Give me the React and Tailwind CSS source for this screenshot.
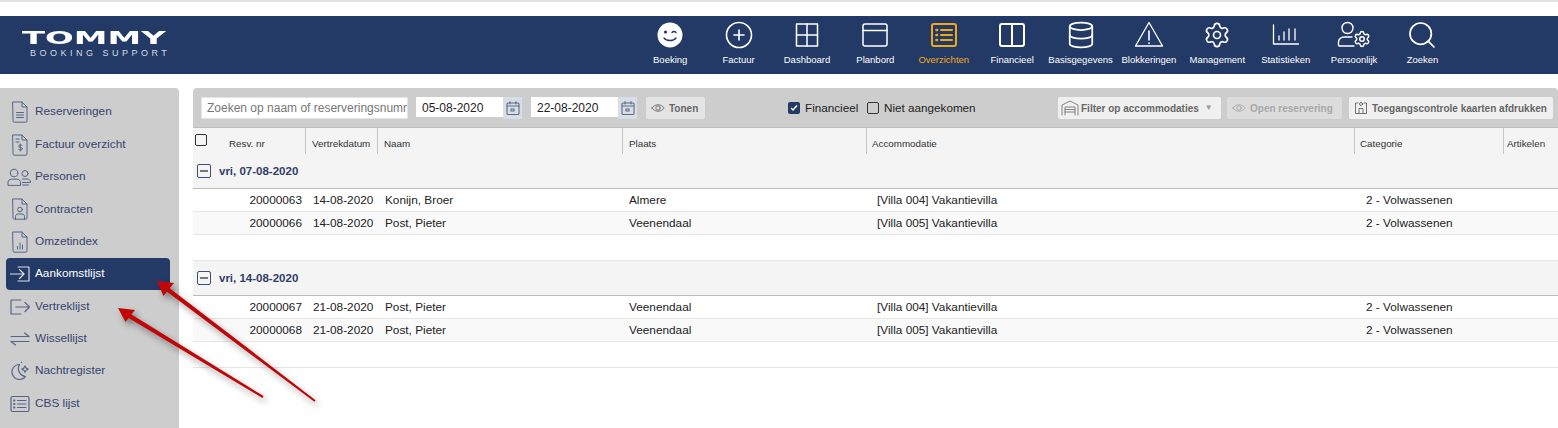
import React from "react";
import { Database, Settings, Search, CirclePlus } from "lucide-react";

const Line = ({ size = 24, className = "", sw = 1.5, children, vb = "0 0 24 24" }) => (
    <svg width={size} height={size} viewBox={vb} fill="none" stroke="currentColor" strokeWidth={sw} strokeLinecap="round" strokeLinejoin="round" className={className}>
        {children}
    </svg>
);

const navItems = [
    {
        label: "Boeking",
        icon: (
            <svg width="26" height="26" viewBox="0 0 26 26">
                <circle cx="13" cy="13" r="12.5" fill="#fff" />
                <circle cx="8.5" cy="10" r="1.6" fill="#243a66" />
                <path d="M15 10.5c1-1.4 3-1.4 4 0" fill="none" stroke="#243a66" strokeWidth="1.4" strokeLinecap="round" />
                <path d="M7 16c2.6 3.4 9.4 3.4 12 0" fill="none" stroke="#243a66" strokeWidth="1.4" strokeLinecap="round" />
            </svg>
        ),
    },
    { label: "Factuur", icon: <CirclePlus size={30} strokeWidth={1.3} /> },
    {
        label: "Dashboard",
        icon: (
            <Line size={26} sw={1.5} vb="0 0 26 26">
                <rect x="2.5" y="2" width="21" height="22" />
                <path d="M13 2v22M2.500 13h21" />
            </Line>
        ),
    },
    {
        label: "Planbord",
        icon: (
            <Line size={28} sw={1.5} vb="0 0 28 28">
                <rect x="2" y="3" width="24" height="22" rx="2" />
                <path d="M2 9.500h24" />
            </Line>
        ),
    },
    {
        label: "Overzichten",
        active: true,
        icon: (
            <Line size={28} sw={2} vb="0 0 28 28">
                <rect x="2" y="3" width="24" height="22" rx="2" />
                <path d="M11 9h11M11 14h11M11 19h11" strokeWidth="2" />
                <path d="M6.500 9h.5M6.500 14h.5M6.500 19h.5" strokeWidth="2.600" />
            </Line>
        ),
    },
    {
        label: "Financieel",
        icon: (
            <Line size={28} sw={2} vb="0 0 28 28">
                <rect x="2" y="3" width="24" height="22" rx="2" />
                <path d="M14 3v22" />
            </Line>
        ),
    },
    { label: "Basisgegevens", icon: <Database size={30} strokeWidth={1.4} /> },
    {
        label: "Blokkeringen",
        icon: (
            <Line size={30} sw={1.3} vb="0 0 30 30">
                <path d="M15 2.500 28.500 26h-27z" />
                <path d="M15 11v9M15 23v.4" strokeWidth="1.600" />
            </Line>
        ),
    },
    { label: "Management", icon: <Settings size={28} strokeWidth={1.4} /> },
    {
        label: "Statistieken",
        icon: (
            <Line size={28} sw={1.300} vb="0 0 28 28">
                <path d="M1.500 4v19h25" />
                <path d="M7 19v-4M12 19v-8M17 19v-11M23 19v-11" />
            </Line>
        ),
    },
    {
        label: "Persoonlijk",
        icon: (
            <svg width="34" height="28" viewBox="0 0 34 28" fill="none" stroke="currentColor" strokeWidth="1.400" strokeLinecap="round" strokeLinejoin="round">
                <circle cx="10.500" cy="7" r="5.500" />
                <path d="M15 16H7c-3 0-5.500 2.500-5.500 5v3c0 .6.400 1 1 1H17" />
                <Settings x={16} y={9} width={18} height={18} strokeWidth={2} />
            </svg>
        ),
    },
    { label: "Zoeken", icon: <Search size={32} strokeWidth={1.3} /> },
];

const DocIcon = ({ children }) => (
    <Line size={24} sw={1} vb="0 0 24 24">
        <path d="M5 2h9l5 5v14a1.200 1.200 0 0 1-1.200 1.200H6.200A1.200 1.200 0 0 1 5 21z" />
        <path d="M14 2v5h5" />
        {children}
    </Line>
);

const sideItems = [
    { label: "Reserveringen", icon: <DocIcon><path d="M8.500 12.500h7M8.500 15h7M8.500 17.500h7" /></DocIcon> },
    {
        label: "Factuur overzicht",
        icon: (
            <DocIcon>
                <path d="M8 6h3M8 9h3" />
                <path d="M14.200 12.500c-.5-.8-3.600-1-3.600.6 0 1.800 3.800.9 3.800 2.800 0 1.600-3.300 1.500-3.900.5M12.300 11v7" />
            </DocIcon>
        ),
    },
    {
        label: "Personen",
        icon: (
            <Line size={26} sw={1} vb="0 0 26 18" className="-ml-[2px]">
                <circle cx="8" cy="5" r="3.800" />
                <path d="M2 17v-2.500c0-2 1.500-3.300 3.500-3.300h5.500c2 0 3.500 1.300 3.500 3.300V17z" />
                <circle cx="19" cy="5.500" r="3" />
                <path d="M16.500 11h4.500c2 0 3.500 1.300 3.500 3v.5h-8M16.500 17h6" />
            </Line>
        ),
    },
    {
        label: "Contracten",
        icon: (
            <DocIcon>
                <circle cx="12" cy="12.500" r="2.300" />
                <path d="M7.500 22v-2.500c0-1.500 1-2.500 2.500-2.500h4c1.500 0 2.500 1 2.500 2.500V22" />
            </DocIcon>
        ),
    },
    { label: "Omzetindex", icon: <DocIcon><path d="M9.500 19v-2.500M12 19v-6M14.500 19v-4" /></DocIcon> },
    {
        label: "Aankomstlijst",
        active: true,
        icon: (
            <Line size={20} sw={1.200} vb="0 0 20 20">
                <path d="M0.500 10h13M9.500 5.500l4.500 4.500-4.500 4.500M8 3h11v14H8" />
            </Line>
        ),
    },
    {
        label: "Vertreklijst",
        icon: (
            <Line size={20} sw={1.200} vb="0 0 20 20">
                <path d="M6 10h13M15 5.500l4.500 4.500-4.500 4.500M11 3H1v14h10" />
            </Line>
        ),
    },
    {
        label: "Wissellijst",
        icon: (
            <Line size={20} sw={1.200} vb="0 0 20 20">
                <path d="M1 7.500h18M14.500 4 19 7.500M19 12.500H1M5.500 16 1 12.500" />
            </Line>
        ),
    },
    {
        label: "Nachtregister",
        icon: (
            <Line size={20} sw={1.200} vb="0 0 20 20">
                <path d="M9.500 3.500a7.500 7.500 0 1 0 6 12 8 8 0 0 1-6-12z" />
                <path d="M15 5l1.100 2 2 1.100-2 1.100-1.100 2-1.100-2-2-1.100 2-1.100zM11.500 1v.6" />
            </Line>
        ),
    },
    {
        label: "CBS lijst",
        icon: (
            <Line size={20} sw={1.200} vb="0 0 20 20">
                <rect x="1" y="2.500" width="18" height="15" rx="1.500" />
                <path d="M7.500 6.500h8.500M7.500 10h8.500M7.500 13.500h8.500" />
                <path d="M4 6.500h.5M4 10h.5M4 13.500h.5" strokeWidth="1.800" />
            </Line>
        ),
    },
    {
        label: "",
        icon: (
            <Line size={20} sw={1.200} vb="0 0 20 20">
                <rect x="1" y="2.500" width="18" height="15" rx="1.500" />
            </Line>
        ),
    },
];

const columns = [
    { label: "Resv. nr", className: "pl-[36px]" },
    { label: "Vertrekdatum", className: "pl-[6px]" },
    { label: "Naam", className: "pl-[6px]" },
    { label: "Plaats", className: "pl-[6px]" },
    { label: "Accommodatie", className: "pl-[5px]" },
    { label: "Categorie", className: "pl-[5px]" },
    { label: "Artikelen", className: "pl-[3px]" },
];

const groups = [
    {
        date: "vri, 07-08-2020",
        rows: [
            ["20000063", "14-08-2020", "Konijn, Broer", "Almere", "[Villa 004] Vakantievilla"],
            ["20000066", "14-08-2020", "Post, Pieter", "Veenendaal", "[Villa 005] Vakantievilla"],
        ],
    },
    {
        date: "vri, 14-08-2020",
        rows: [
            ["20000067", "21-08-2020", "Post, Pieter", "Veenendaal", "[Villa 004] Vakantievilla"],
            ["20000068", "21-08-2020", "Post, Pieter", "Veenendaal", "[Villa 005] Vakantievilla"],
        ],
    },
];

const gridCols = "grid grid-cols-[112px_72px_245px_244px_488px_149px_55px]";

const CalendarBtn = () => (
    <div className="flex h-[22px] w-[19px] items-center justify-center bg-[#d9dee6] text-[#5b6b88]">
        <Line size={16} sw={1.100} vb="0 0 16 16">
            <rect x="2" y="3" width="12" height="11.500" rx="1" />
            <path d="M2 6h12M5 1.500V4M11 1.500V4" />
            <rect x="6" y="9" width="3" height="2" />
        </Line>
    </div>
);

const Eye = () => (
    <Line size={14} sw={1} vb="0 0 16 16">
        <path d="M1 8c3.500-5 10.500-5 14 0-3.500 5-10.500 5-14 0z" />
        <circle cx="8" cy="8" r="2.500" />
    </Line>
);

const ToolButton = ({ className = "", children }) => (
    <div className={`flex h-[22px] items-center rounded-[2px] text-[10px] font-bold ${className}`}>{children}</div>
);

const App = () => {
    return (
        <div className="relative h-[428px] w-[1558px] overflow-hidden bg-white font-['Liberation_Sans',Arial,sans-serif]">
            <div className="h-[2px] bg-[#e2e2e2]" />

            {/* top bar */}
            <header className="mt-[14px] flex h-[58px] bg-[#243a66] text-white">
                <div className="w-[636px] pl-[22px] pt-[13px]">
                    <div className="origin-left scale-x-[1.88] font-['DejaVu_Sans',sans-serif] text-[18px] font-bold leading-[18px]">TOMMY</div>
                    <div className="mt-[1px] pl-[8px] text-[9px] leading-[10px] tracking-[3.5px] text-[#d5dae4]">BOOKING SUPPORT</div>
                </div>
                <nav className="-mt-[1px] flex">
                    {navItems.map((item) => (
                        <div key={item.label} className={`flex w-[68.4px] flex-col items-center ${item.active ? "text-[#f0a818]" : "text-white"}`}>
                            <div className="flex h-[39px] items-center justify-center">{item.icon}</div>
                            <span className="whitespace-nowrap text-[9.5px] leading-[12px]">{item.label}</span>
                        </div>
                    ))}
                </nav>
            </header>

            <div className="mt-[14px] flex">
                {/* left menu */}
                <aside className="h-[340px] w-[179px] shrink-0 overflow-hidden rounded-tr-[4px] bg-[#cdcdcd] pl-[6px] pt-[8px]">
                    {sideItems.map((item, i) => (
                        <div
                            key={i}
                            className={`flex h-[32.4px] w-[164px] items-center gap-[3px] rounded-[4px] pl-[2px] text-[11.8px] ${
                                item.active ? "bg-[#243a66] text-white" : "text-[#354470]"
                            }`}
                        >
                            <span className={`flex w-[24px] shrink-0 justify-center ${item.active ? "text-[#d9dee8]" : "text-[#55658a]"}`}>{item.icon}</span>
                            {item.label}
                        </div>
                    ))}
                </aside>

                {/* content */}
                <main className="ml-[14px] w-[1365px]">
                    <div className="flex h-[39px] items-start rounded-t-[4px] bg-[#cdcdcd] pl-[8px] pt-[9px]">
                        <input
                            readOnly
                            placeholder="Zoeken op naam of reserveringsnummer"
                            className="h-[22px] w-[207px] border border-[#e4e4e4] bg-white pl-[5px] text-[12px] outline-none placeholder:text-[#777]"
                        />
                        <input readOnly value="05-08-2020" className="ml-[8px] h-[20px] w-[87px] bg-white pl-[6px] pt-[1px] text-[12px] text-[#222] outline-none" />
                        <CalendarBtn />
                        <input readOnly value="22-08-2020" className="ml-[9px] h-[20px] w-[87px] bg-white pl-[6px] pt-[1px] text-[12px] text-[#222] outline-none" />
                        <CalendarBtn />
                        <div className="ml-[9px] flex h-[22px] w-[59px] items-center gap-[4px] rounded-[2px] bg-[#e4e4e4] pl-[5px] text-[10px] font-bold text-[#666]">
                            <Eye />
                            Tonen
                        </div>
                        <div className="ml-[83px] flex h-[21px] w-[187px] shrink-0 items-center whitespace-nowrap text-[11.7px] text-[#222]">
                            <span className="flex h-[12px] w-[12px] shrink-0 items-center justify-center rounded-[2px] bg-[#243a66]">
                                <svg width="10" height="10" viewBox="0 0 10 10" fill="none" stroke="#fff" strokeWidth="1.400">
                                    <path d="M2 5l2 2 4-4.500" />
                                </svg>
                            </span>
                            <span className="ml-[5px] w-[57px] shrink-0">Financieel</span>
                            <span className="ml-[5px] h-[12px] w-[12px] shrink-0 rounded-[2px] border border-[#333]" />
                            <span className="ml-[5px]">Niet aangekomen</span>
                        </div>
                        <ToolButton className="ml-[83px] w-[163px] bg-[#f0f0f0] pl-[3px] text-[#666]">
                            <span className="text-[#777]">
                                <Line size={18} sw={0.9} vb="0 0 18 18">
                                    <path d="M1 16V6l8-4 8 4v10" />
                                    <path d="M4 16V8h10v8M4 10.500h10M4 13h10" />
                                </Line>
                            </span>
                            <span className="ml-[2px]">Filter op accommodaties</span>
                            <span className="ml-[6px] text-[8px] text-[#999]">▼</span>
                        </ToolButton>
                        <ToolButton className="ml-[6px] w-[115px] gap-[4px] bg-[#dcdcdc] pl-[5px] text-[#a8a8a8]">
                            <Eye />
                            Open reservering
                        </ToolButton>
                        <ToolButton className="ml-[7px] w-[204px] gap-[4px] bg-[#f0f0f0] pl-[5px] text-[#666]">
                            <Line size={14} sw={0.9} vb="0 0 14 14">
                                <path d="M4 2H1.500v10.500h11V2H10" />
                                <circle cx="7" cy="3" r="1.500" />
                                <path d="M5 12V7.500h4V12" />
                            </Line>
                            Toegangscontrole kaarten afdrukken
                        </ToolButton>
                    </div>

                    {/* table head */}
                    <div className={`${gridCols} h-[27px] border-t border-[#bdbdbd] bg-[#f4f4f4] text-[9.8px] text-[#333]`}>
                        {columns.map((col, i) => (
                            <div key={col.label} className={`relative flex items-center whitespace-nowrap pt-[7px] ${i > 0 ? "border-l border-[#c8c8c8]" : ""} ${col.className}`}>
                                {i === 0 && <span className="absolute left-[2px] top-[6px] h-[12px] w-[12px] rounded-[2px] border-[1.5px] border-[#333]" />}
                                {col.label}
                            </div>
                        ))}
                    </div>

                    {groups.map((group) => (
                        <div key={group.date}>
                            <div className="flex h-[35px] items-center gap-[8px] border-b border-[#bbb] bg-[#f4f4f4] pl-[4px] text-[11.5px] font-bold text-[#2f3f66]">
                                <span className="flex h-[14px] w-[14px] items-center justify-center rounded-[2px] border border-[#3f4f75]">
                                    <span className="h-[1.5px] w-[8px] bg-[#777]" />
                                </span>
                                <span className="pt-[2px]">{group.date}</span>
                            </div>
                            {group.rows.map((row, i) => (
                                <div key={row[0]} className={`${gridCols} h-[23px] border-b border-[#e6e6e6] text-[11.8px] leading-[23px] text-[#222] ${i === 1 ? "bg-[#f9f9f9]" : "bg-white"}`}>
                                    <div className="pr-[3px] text-right">{row[0]}</div>
                                    <div className="pl-[8px]">{row[1]}</div>
                                    <div className="pl-[8px]">{row[2]}</div>
                                    <div className="pl-[7px]">{row[3]}</div>
                                    <div className="pl-[11px]">{row[4]}</div>
                                    <div className="pl-[12px]">2 - Volwassenen</div>
                                    <div />
                                </div>
                            ))}
                            <div className="h-[26px] border-b border-[#e6e6e6]" />
                        </div>
                    ))}
                </main>
            </div>

            {/* annotation arrows on top of the screenshot */}
            <svg width="1558" height="428" className="pointer-events-none absolute left-0 top-0">
                <g fill="#c00606" className="drop-shadow-[3px_4px_3px_rgba(0,0,0,0.4)]">
                    <path d="M315.6 400.2 168.300 287.200 165.700 290.800 314.400 401.800z" />
                    <path d="M157 281 174 283 163.500 296z" />
                    <path d="M263.500 396.100 129.100 313.100 126.900 316.900 262.500 397.900z" />
                    <path d="M118 308 135 310 125.500 322z" />
                </g>
            </svg>
        </div>
    );
};

export default App;
